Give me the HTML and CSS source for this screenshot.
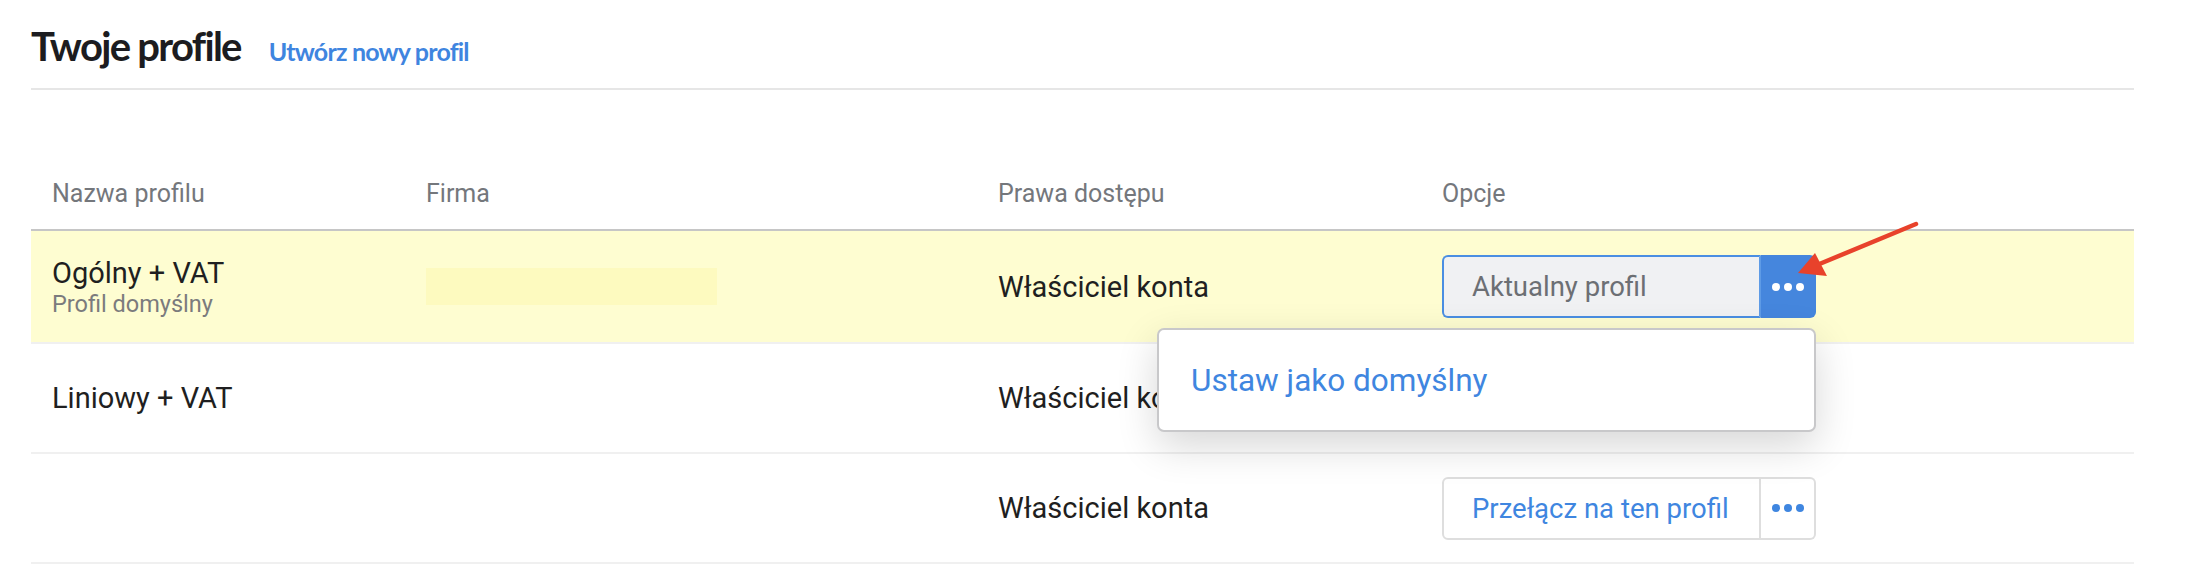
FILE: index.html
```html
<!DOCTYPE html>
<html lang="pl">
<head>
<meta charset="utf-8">
<title>Twoje profile</title>
<link rel="stylesheet" href="styles.css">
</head>
<body>
<div class="page">
  <header class="page-head">
    <h1 class="title">Twoje profile</h1>
    <a class="create-link" href="#">Utwórz nowy profil</a>
  </header>

  <div class="table">
    <div class="row head">
      <div class="cell">Nazwa profilu</div>
      <div class="cell">Firma</div>
      <div class="cell">Prawa dostępu</div>
      <div class="cell">Opcje</div>
    </div>

    <div class="row current">
      <div class="cell name">
        <div class="name-main">Ogólny + VAT</div>
        <div class="name-sub">Profil domyślny</div>
      </div>
      <div class="cell"><div class="firm-mask"></div></div>
      <div class="cell role">Właściciel konta</div>
      <div class="cell options">
        <div class="btn-group active">
          <span class="btn-main">Aktualny profil</span>
          <span class="btn-more"><i></i><i></i><i></i></span>
          <div class="dropdown"><span class="dropdown-item">Ustaw jako domyślny</span></div>
        </div>
      </div>
    </div>

    <div class="row">
      <div class="cell name"><div class="name-main">Liniowy + VAT</div></div>
      <div class="cell"></div>
      <div class="cell role">Właściciel konta</div>
      <div class="cell options">
        <div class="btn-group">
          <span class="btn-main">Przełącz na ten profil</span>
          <span class="btn-more"><i></i><i></i><i></i></span>
        </div>
      </div>
    </div>

    <div class="row">
      <div class="cell name"></div>
      <div class="cell"></div>
      <div class="cell role">Właściciel konta</div>
      <div class="cell options">
        <div class="btn-group">
          <span class="btn-main">Przełącz na ten profil</span>
          <span class="btn-more"><i></i><i></i><i></i></span>
        </div>
      </div>
    </div>
  </div>

  <svg class="arrow" width="140" height="70" viewBox="0 0 140 70">
    <line x1="126" y1="9" x2="27" y2="50" stroke="#e8422b" stroke-width="4.5" stroke-linecap="round"/>
    <polygon points="8,58 25,38 37,61" fill="#e8422b"/>
  </svg>
</div>
</body>
</html>
```

FILE: styles.css
```css
* { box-sizing: border-box; }

html, body {
  margin: 0;
  padding: 0;
  background: #ffffff;
}

body {
  font-family: Roboto, "Noto Sans", sans-serif;
  color: #1f1f21;
}

.page {
  position: relative;
  margin-left: 31px;
  width: 2103px;
}

/* ---------- heading ---------- */
.page-head {
  display: flex;
  align-items: baseline;
  gap: 28px;
  height: 90px;
  padding-top: 22px;
  border-bottom: 2px solid #e6e6e6;
}

.title {
  margin: 0;
  font-family: Lato, "Open Sans", sans-serif;
  font-weight: 700;
  font-size: 40px;
  line-height: 48px;
  letter-spacing: -1.7px;
  color: #1c1c20;
}

.create-link {
  font-family: Lato, "Open Sans", sans-serif;
  font-weight: 700;
  font-size: 25px;
  letter-spacing: -0.8px;
  color: #3f85df;
  text-decoration: none;
}

/* ---------- table ---------- */
.row {
  display: grid;
  grid-template-columns: 374px 572px 444px 1fr;
  align-items: center;
  padding-left: 21px;
  height: 110px;
  border-bottom: 2px solid #f0f0f0;
}

.row.head {
  height: 141px;
  align-items: end;
  padding-bottom: 20px;
  border-bottom: 2px solid #c6c6c6;
  font-size: 25px;
  line-height: 30px;
  color: #74777c;
}

.row.current {
  height: 113px;
  background: #fefdd1;
}

.name-main,
.role {
  font-size: 29px;
  line-height: 34px;
}

.name-sub {
  font-size: 23.5px;
  line-height: 28px;
  color: #7b7b7d;
}

.firm-mask {
  width: 291px;
  height: 37px;
  background: #fdfabf;
}

/* ---------- buttons ---------- */
.btn-group {
  position: relative;
  display: inline-flex;
  height: 63px;
}

.btn-main {
  display: flex;
  align-items: center;
  width: 319px;
  padding: 0 28px;
  font-size: 27.5px;
  white-space: nowrap;
  color: #3f86e0;
  background: #ffffff;
  border: 2px solid #dedede;
  border-radius: 6px 0 0 6px;
}

.btn-more {
  display: flex;
  align-items: center;
  justify-content: center;
  gap: 4px;
  width: 55px;
  border: 2px solid #dedede;
  border-left: 0;
  border-radius: 0 6px 6px 0;
  background: #ffffff;
}

.btn-more i {
  width: 8px;
  height: 8px;
  border-radius: 50%;
  background: #3f86e0;
}

.btn-group.active .btn-main {
  background: #f0f1f3;
  color: #6c6f74;
  border-color: #4a8ee2;
  border-right-color: #5e9be6;
}

.btn-group.active .btn-more {
  background: #4586dd;
  border-color: #4586dd;
}

.btn-group.active .btn-more i {
  background: #ffffff;
}

/* ---------- dropdown ---------- */
.dropdown {
  position: absolute;
  z-index: 5;
  top: 73px;
  right: 0;
  width: 659px;
  height: 104px;
  display: flex;
  align-items: center;
  padding-left: 32px;
  background: #ffffff;
  border: 2px solid #c8c8ca;
  border-radius: 7px;
  box-shadow: 0 14px 40px rgba(0, 0, 0, 0.16);
}

.dropdown-item {
  font-size: 31.5px;
  color: #3f86e0;
}

/* ---------- annotation ---------- */
.arrow {
  position: absolute;
  left: 1759px;
  top: 215px;
  z-index: 6;
}
```
